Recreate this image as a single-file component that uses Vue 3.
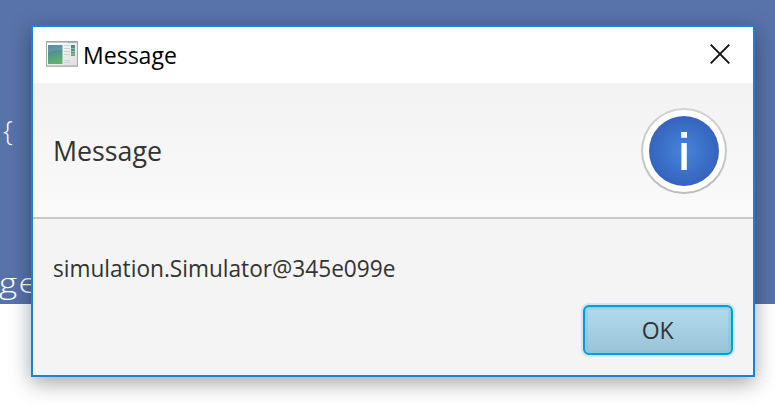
<script setup>
const title = 'Message'
const message = 'simulation.Simulator@345e099e'
</script>

<template>
  <div class="desktop">
    <div class="editor">
      <span class="code brace">{</span>
      <span class="code tail">ge</span>
    </div>
    <section class="dialog">
      <header class="titlebar">
        <svg class="app-icon" width="32" height="26" viewBox="0 0 32 26">
          <defs>
            <linearGradient id="pane" x1="0" y1="0" x2="0.3" y2="1">
              <stop offset="0" stop-color="#4a79a4" />
              <stop offset="0.5" stop-color="#4f9590" />
              <stop offset="1" stop-color="#62b070" />
            </linearGradient>
            <linearGradient id="frame" x1="0" y1="0" x2="1" y2="1">
              <stop offset="0" stop-color="#ffffff" />
              <stop offset="1" stop-color="#dedede" />
            </linearGradient>
          </defs>
          <rect x="0.5" y="0.5" width="31" height="24.5" fill="url(#frame)" stroke="#a4a8ae" />
          <path d="M0 25.5H32" stroke="#b5b5b5" />
          <path d="M1 1.5H31" stroke="#c2c8d2" />
          <path d="M22 1.5H30" stroke="#a5adc0" />
          <rect x="2" y="4" width="14.5" height="19" fill="url(#pane)" />
          <path d="M2 12Q8 8.5 16.5 9V4H2Z" fill="#fff" opacity=".1" />
          <path d="M18 4.5H24M18 7.5H24M18 10.5H24M18 13.5H24M18 19.5H24M18 21.5H24" stroke="#d0d0d0" stroke-width="1.2" />
          <rect x="25" y="4" width="4" height="11" fill="url(#pane)" />
          <path d="M25 7.5H29M25 10.5H29M25 13H29" stroke="#b0d2cf" stroke-width=".6" />
        </svg>
        <span class="title">{{ title }}</span>
        <svg class="close" width="20" height="20" viewBox="0 0 20 20">
          <path d="M.7 .7L19.3 19.3M19.3 .7L.7 19.3" stroke="#111" stroke-width="1.9" />
        </svg>
      </header>
      <div class="heading">
        <span class="heading-text">{{ title }}</span>
        <svg class="info" width="86" height="86" viewBox="0 0 86 86">
          <defs>
            <radialGradient id="disc">
              <stop offset="0" stop-color="#4586d9" />
              <stop offset="1" stop-color="#3663be" />
            </radialGradient>
            <linearGradient id="ring" x1="0" y1="0" x2="0" y2="1">
              <stop offset="0" stop-color="#d3d3d3" />
              <stop offset="1" stop-color="#bcbcbc" />
            </linearGradient>
          </defs>
          <circle cx="43" cy="43" r="43" fill="url(#ring)" />
          <circle cx="43" cy="43" r="41" fill="#fff" />
          <circle cx="43" cy="43" r="35" fill="url(#disc)" />
          <path d="M40.2 24H46V29.8H40.2ZM40.4 35H45.8V62H40.4Z" fill="#fff" />
        </svg>
      </div>
      <div class="content">
        <p class="message">{{ message }}</p>
        <button class="ok"><span class="ok-label">OK</span></button>
      </div>
    </section>
  </div>
</template>

<style>
body {
  margin: 0;
  overflow: hidden;
}
</style>

<style scoped>
.desktop {
  position: relative;
  box-sizing: border-box;
  width: 775px;
  height: 405px;
  overflow: hidden;
  background: #fff;
  font-family: "Open Sans", "Noto Sans", sans-serif;
}
.editor {
  height: 304px;
  background: #5873aa;
}
.code {
  position: absolute;
  color: #fff;
  font-weight: 300;
  line-height: 36px;
  transform-origin: left;
}
.brace {
  left: 3px;
  top: 112px;
  font-size: 28px;
}
.tail {
  left: -1px;
  top: 264px;
  font-size: 28px;
  letter-spacing: 1px;
  transform: scaleX(1.25);
}
.dialog {
  position: absolute;
  left: 31px;
  top: 25px;
  box-sizing: border-box;
  width: 724px;
  height: 352px;
  display: flex;
  flex-direction: column;
  border: 2px solid #1883d7;
  background: #f4f4f4;
  box-shadow: 0 6px 20px rgba(0, 0, 0, 0.36);
}
.titlebar {
  display: flex;
  align-items: center;
  height: 56px;
  box-sizing: border-box;
  padding: 0 23px 0 13px;
  background: #fff;
}
.app-icon {
  margin-bottom: 2px;
}
.title {
  margin: 0 auto 0 5px;
  color: #000;
  font-size: 24px;
  line-height: 32px;
  transform: scaleX(0.96);
  transform-origin: left;
}
.close {
  margin-bottom: 2px;
}
.heading {
  display: flex;
  align-items: center;
  justify-content: space-between;
  box-sizing: border-box;
  height: 136px;
  padding: 0 26px 0 20px;
  border-bottom: 2px solid #c8c8c8;
  background: linear-gradient(#f2f2f2, #fafafa);
}
.heading-text {
  color: #333;
  font-size: 28px;
  line-height: 38px;
  transform: scaleX(0.955);
  transform-origin: left;
}
.info {
  margin-top: 2px;
}
.content {
  flex: 1;
  display: flex;
  flex-direction: column;
  padding: 33px 20px 20px;
}
.message {
  align-self: flex-start;
  margin: 0;
  color: #333;
  font-size: 24px;
  line-height: 32px;
  white-space: nowrap;
  transform: scaleX(0.943);
  transform-origin: left;
}
.ok {
  align-self: flex-end;
  box-sizing: border-box;
  width: 150px;
  height: 50px;
  margin-top: auto;
  padding: 0;
  border: 2px solid #039ed3;
  border-radius: 6px;
  background: linear-gradient(#b2dcee, #9bc3d7);
  box-shadow: 0 0 0 2px #d0e7ef, inset 0 0 0 1px #83cde5, inset 0 0 0 3px rgba(120, 190, 220, 0.3);
  color: #333;
  font: 24px/44px "Open Sans", "Noto Sans", sans-serif;
}
.ok-label {
  display: inline-block;
  transform: scaleX(0.96);
}
</style>
